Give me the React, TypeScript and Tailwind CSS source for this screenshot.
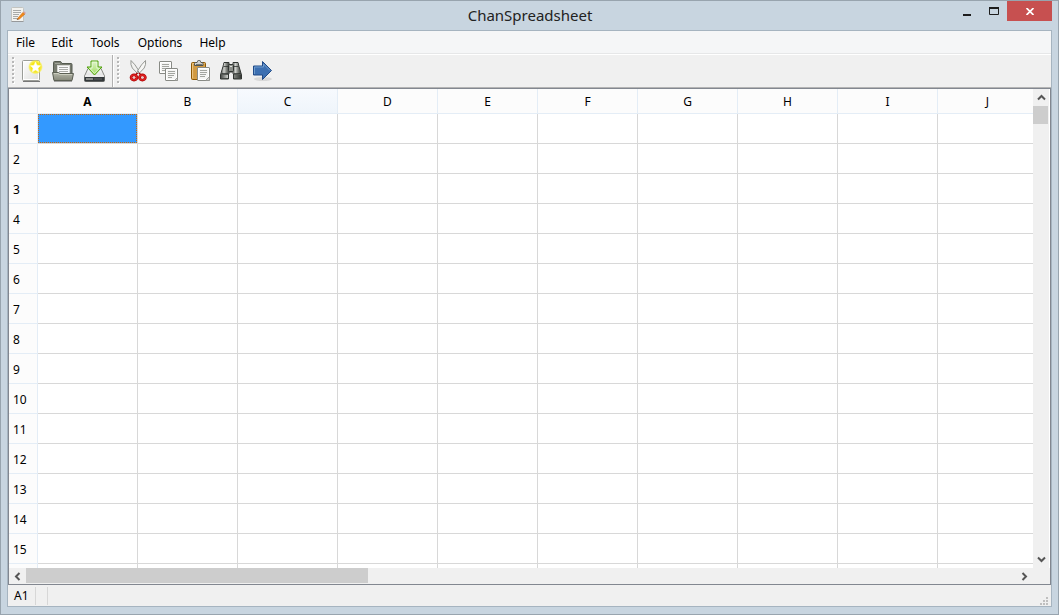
import type { ReactNode } from "react";

const columns = ["A", "B", "C", "D", "E", "F", "G", "H", "I", "J"];
const rows = Array.from({ length: 15 }, (_, i) => i + 1);
const menus = ["File", "Edit", "Tools", "Options", "Help"];

function AppIcon() {
  return (
    <svg width="16" height="16" viewBox="0 0 16 16" fill="none" aria-hidden="true">
      <rect x="1.5" y=".5" width="12" height="14" rx="1" fill="#f3f3f0" stroke="#c3c4c0" />
      <path d="M1.5 14.5h12" stroke="#96989a" />
      <path d="M3 3.500h8M3 5.500h8M3 7.500h6M3 9.500h5M3 11.500h4" stroke="#a8aaa8" />
      <path d="M7.500 11.500 13 5.300l2 1.700-5.500 5-2.500.5z" fill="#f08a1c" stroke="#c9670a" strokeWidth=".5" />
      <path d="m13 5.300 1-1 2 1.700-1 1z" fill="#d7a0a0" />
      <path d="m7.500 11.500-.5 1.300 2-.8z" fill="#444" />
    </svg>
  );
}

function NewIcon() {
  return (
    <svg width="24" height="24" viewBox="0 0 24 24" fill="none" aria-hidden="true">
      <defs>
        <linearGradient id="paper" x1="0" y1="0" x2="1" y2="1">
          <stop stopColor="#fff" />
          <stop offset="1" stopColor="#dededc" />
        </linearGradient>
        <radialGradient id="glow">
          <stop offset=".5" stopColor="#f5e500" />
          <stop offset=".8" stopColor="#f8ec30" stopOpacity=".8" />
          <stop offset="1" stopColor="#f8f060" stopOpacity="0" />
        </radialGradient>
      </defs>
      <path d="M3 22.500h17" stroke="#777" />
      <rect x="2.500" y="1.500" width="17" height="20" rx="1" fill="url(#paper)" stroke="#9b9d98" />
      <rect x="3.500" y="2.500" width="15" height="18" stroke="#fff" />
      <circle cx="15.500" cy="8" r="7.500" fill="url(#glow)" />
      <path d="m15.500 3 1.500 3.200 3.500.5-2.500 2.500.6 3.500-3.100-1.600-3.100 1.600.6-3.500-2.500-2.500 3.500-.5z" fill="#fff" stroke="#fffce0" strokeWidth=".6" />
    </svg>
  );
}

function OpenIcon() {
  return (
    <svg width="24" height="24" viewBox="0 0 24 24" fill="none" aria-hidden="true">
      <defs>
        <linearGradient id="folder" x1="0" y1="0" x2="0" y2="1">
          <stop stopColor="#b6b8aa" />
          <stop offset="1" stopColor="#85877a" />
        </linearGradient>
      </defs>
      <path d="M2.500 20V3.500q0-1 1-1H9q1 0 1.500 1l.5 1h9q1 0 1 1V20z" fill="#777b6f" stroke="#555a50" />
      <path d="M4 4.500h5" stroke="#a1a499" />
      <rect x="6.500" y="6.500" width="12" height="9" fill="#fafafa" stroke="#d6d6d3" />
      <path d="M8 8.500h9M8 10.500h9M8 12.500h9" stroke="#a9aaa7" />
      <path d="M1.500 13.500h6l1.500 1h13.500L21 21.500H3z" fill="url(#folder)" stroke="#5c6055" strokeLinejoin="round" />
      <path d="M3 14.500h4l1.500 1h12.500" stroke="#cbcdbf" />
      <path d="M3 22.500h18" stroke="#555" opacity=".5" />
    </svg>
  );
}

function SaveIcon() {
  return (
    <svg width="24" height="24" viewBox="0 0 24 24" fill="none" aria-hidden="true">
      <defs>
        <linearGradient id="drive" x1="0" y1="0" x2="0" y2="1">
          <stop stopColor="#fafafa" />
          <stop offset="1" stopColor="#cfcfcf" />
        </linearGradient>
        <linearGradient id="down" x1="0" y1="0" x2="0" y2="1">
          <stop stopColor="#e1f5cd" />
          <stop offset="1" stopColor="#9cdb5a" />
        </linearGradient>
      </defs>
      <path d="M6 9.500h13l3.500 7.500v4.500q0 1-1 1H3.500q-1 0-1-1V17z" fill="url(#drive)" stroke="#888a85" />
      <path d="M3 17h19" stroke="#f7f7f7" />
      <path d="M2.500 18h20v3.500q0 1-1 1H3.500q-1 0-1-1z" fill="#34393c" />
      <path d="M4 20h7" stroke="#858885" strokeWidth="2" />
      <path d="M13 19v2M15 19v2M17 19v2M19 19v2" stroke="#6f7270" strokeWidth=".8" />
      <path d="M9 2h7v6h4l-7.500 8L5 8h4z" fill="url(#down)" stroke="#4da006" strokeLinejoin="round" />
      <path d="M10.200 3.200h4.600v6h2.500l-4.800 5.200L7.700 9.200h2.500z" stroke="#eafadd" strokeWidth=".8" />
    </svg>
  );
}

function CutIcon() {
  return (
    <svg width="24" height="24" viewBox="0 0 24 24" fill="none" aria-hidden="true">
      <path d="M5 1.500q-.8 4 1.300 7.500l5.200 5.500 1.500-2.500Q9 5 5 1.500z" fill="#f1f1ef" stroke="#8c8e89" strokeWidth=".9" />
      <path d="M19.500 1.500q.8 4-1.300 7.500L13 14.500 11.500 12q4-7 8-10.500z" fill="#f7f7f5" stroke="#8c8e89" strokeWidth=".9" />
      <circle cx="12.200" cy="12.500" r=".8" fill="#888" />
      <path d="m11.500 14-2 2M13 14l2 2" stroke="#a80000" strokeWidth="1.500" />
      <ellipse cx="8" cy="18.500" rx="2.900" ry="2.500" stroke="#a40000" strokeWidth="2.800" />
      <ellipse cx="16.400" cy="18.500" rx="2.900" ry="2.500" stroke="#a40000" strokeWidth="2.800" />
      <ellipse cx="8" cy="18.500" rx="2.900" ry="2.500" stroke="#df2020" strokeWidth="1.500" />
      <ellipse cx="16.400" cy="18.500" rx="2.900" ry="2.500" stroke="#df2020" strokeWidth="1.500" />
      <circle cx="8" cy="18.500" r="1.300" fill="#efc6c6" />
      <circle cx="16.400" cy="18.500" r="1.300" fill="#efc6c6" />
    </svg>
  );
}

function CopyIcon() {
  return (
    <svg width="24" height="24" viewBox="0 0 24 24" fill="none" aria-hidden="true">
      <rect x="2.500" y="2.500" width="12" height="12" rx=".5" fill="#f5f5f4" stroke="#888a85" />
      <rect x="3.500" y="3.500" width="10" height="10" stroke="#fff" />
      <path d="M5 5.500h7M5 7.500h7M5 9.500h6M5 11.500h3" stroke="#a3a5a0" />
      <rect x="8.500" y="9.500" width="12" height="12" rx=".5" fill="#f5f5f4" stroke="#888a85" />
      <rect x="9.500" y="10.500" width="10" height="10" stroke="#fff" />
      <path d="M11 12.500h7M11 14.500h7M11 16.500h6M11 18.500h4" stroke="#a3a5a0" />
      <path d="m17.500 21.500 3-3v3z" fill="#d3d4d1" stroke="#888a85" strokeWidth=".7" />
    </svg>
  );
}

function PasteIcon() {
  return (
    <svg width="24" height="24" viewBox="0 0 24 24" fill="none" aria-hidden="true">
      <rect x="3.500" y="3.500" width="14" height="17" rx="1" fill="#d7a24c" stroke="#8f5902" />
      <path d="M4.500 19V4.500h12" stroke="#ecc27d" />
      <rect x="5.500" y="5.500" width="10" height="13" fill="#c88e35" opacity=".4" />
      <path d="M6.500 6.500v-2q0-1 1-1H9l.5-1q0-1 1-1h1q1 0 1 1l.5 1h1q1 0 1 1v2z" fill="#d0d1ce" stroke="#50534f" />
      <path d="M8 5.500h6" stroke="#777975" />
      <rect x="9.500" y="8.500" width="12" height="13" rx=".5" fill="#f5f5f4" stroke="#888a85" />
      <rect x="10.500" y="9.500" width="10" height="11" stroke="#fff" />
      <path d="M12 11.500h7M12 13.500h7M12 15.500h6M12 17.500h5" stroke="#a3a5a0" />
      <path d="m17.500 21.500 4-4v4z" fill="#d3d4d1" stroke="#888a85" strokeWidth=".7" />
    </svg>
  );
}

function FindIcon() {
  return (
    <svg width="24" height="24" viewBox="0 0 24 24" fill="none" aria-hidden="true">
      <defs>
        <linearGradient id="barrel">
          <stop stopColor="#4b4e4b" />
          <stop offset=".35" stopColor="#d0d2ce" />
          <stop offset=".65" stopColor="#80837e" />
          <stop offset="1" stopColor="#343835" />
        </linearGradient>
      </defs>
      <path d="M5 3.500h5v2h4v-2h5l1 4 2.500 8.500v4h-8v-7h-5v7h-8v-4L4 7.500z" fill="#565a56" stroke="#303431" strokeLinejoin="round" />
      <path d="M5 4h5l.5 11H2l2.500-7z" fill="url(#barrel)" />
      <path d="M14 4h5l.5 4L22 15h-8.500z" fill="url(#barrel)" />
      <rect x="9.500" y="5.500" width="5" height="7" rx="1" fill="#8b8e89" stroke="#303431" />
      <path d="M11 7.500h2" stroke="#e2e3df" />
      <path d="M4.500 7.500h5M14.500 7.500h5M2.500 14.500h7M14.500 14.500h7" stroke="#303431" strokeWidth=".8" />
      <path d="M2 16h7v3H2zM15 16h7v3h-7z" fill="url(#barrel)" />
    </svg>
  );
}

function GoIcon() {
  return (
    <svg width="24" height="24" viewBox="0 0 24 24" fill="none" aria-hidden="true">
      <ellipse cx="13" cy="20" rx="9" ry="2" fill="#d8d8d8" />
      <path d="M3.500 7h9V2.500l9 9-9 9V16h-9z" fill="#3c6fb1" stroke="#204a87" strokeLinejoin="round" />
      <path d="M4.500 15V8h9V5l6.500 6.500" stroke="#6f9ccd" />
    </svg>
  );
}

function ToolButton({ label, children }: { label: string; children: ReactNode }) {
  return (
    <button type="button" aria-label={label} className="flex h-8 w-[31px] items-center justify-center hover:bg-sky-100">
      {children}
    </button>
  );
}

function Grip() {
  return (
    <svg width="3" height="28" viewBox="0 0 3 28" className="shrink-0" aria-hidden="true">
      {[0, 1, 2, 3, 4, 5, 6].map((n) => (
        <g key={n}>
          <rect x="1" y={n * 4 + 1} width="2" height="2" fill="#fff" />
          <rect x="0" y={n * 4} width="2" height="2" fill="#b8b8b8" />
        </g>
      ))}
    </svg>
  );
}

function Arrow({ d }: { d: string }) {
  return (
    <svg width="9" height="9" viewBox="0 0 9 9" fill="none" aria-hidden="true">
      <path d={d} stroke="#555" strokeWidth="2" />
    </svg>
  );
}

export default function App() {
  return (
    <div className="flex h-screen flex-col overflow-hidden border border-[#98a4ae] bg-[#c8d5e0] px-[7px] pb-[7px] font-['Noto_Sans',sans-serif] text-xs text-black">
      <header className="flex h-[29px] shrink-0 items-start">
        <div className="flex h-7 flex-1 items-center">
          <span className="ml-0.5">
            <AppIcon />
          </span>
        </div>
        <h1 className="pt-[3px] text-[15px] leading-[22px] text-[#222]">ChanSpreadsheet</h1>
        <div className="-mr-px flex flex-1 justify-end">
          <button type="button" aria-label="Minimize" className="flex h-5 w-[27px] items-center justify-center">
            <svg width="10" height="10" viewBox="0 0 10 10" aria-hidden="true">
              <path d="M1 8h8v2H1z" fill="#1d1d1d" />
            </svg>
          </button>
          <button type="button" aria-label="Maximize" className="flex h-5 w-[27px] items-center justify-center">
            <svg width="10" height="8" viewBox="0 0 10 8" fill="none" aria-hidden="true">
              <path d="M.5 1h9v6.500h-9z" stroke="#1d1d1d" />
              <path d="M0 1h10" stroke="#1d1d1d" strokeWidth="2" />
            </svg>
          </button>
          <button type="button" aria-label="Close" className="flex h-5 w-[45px] items-center justify-center bg-[#c75050]">
            <svg width="8" height="7" viewBox="0 0 8 7" aria-hidden="true">
              <path d="m.5 0 7 7M7.500 0l-7 7" stroke="#fff" strokeWidth="1.700" />
            </svg>
          </button>
        </div>
      </header>

      <main className="-mx-px flex min-h-0 flex-1 flex-col border border-[#a6b4c0] bg-[#f0f0f0]">
        <nav
          aria-label="Menu"
          className="grid h-[23px] shrink-0 grid-cols-[35px_38px_48px_62px_43px] items-center border-b border-[#e6e7e8] bg-[#f5f6f7] pt-0.5"
        >
          {menus.map((name) => (
            <button key={name} type="button" className="text-center leading-5 hover:bg-sky-100">
              {name}
            </button>
          ))}
        </nav>

        <div role="toolbar" aria-label="Tools" className="flex h-[34px] shrink-0 items-center border-t border-b border-t-white border-b-[#b4b4b4]">
          <div className="flex h-full items-center border-r border-[#b0b0b0] pr-[3px] pl-1">
            <Grip />
            <div className="flex pl-px">
              <ToolButton label="New"><NewIcon /></ToolButton>
              <ToolButton label="Open"><OpenIcon /></ToolButton>
              <ToolButton label="Save"><SaveIcon /></ToolButton>
            </div>
          </div>
          <div className="flex h-full items-center border-l border-white pl-[3px]">
            <Grip />
            <div className="flex pl-0.5">
              <ToolButton label="Cut"><CutIcon /></ToolButton>
              <ToolButton label="Copy"><CopyIcon /></ToolButton>
              <ToolButton label="Paste"><PasteIcon /></ToolButton>
              <ToolButton label="Find"><FindIcon /></ToolButton>
              <ToolButton label="Go to cell"><GoIcon /></ToolButton>
            </div>
          </div>
        </div>

        <section aria-label="Sheet" className="flex min-h-0 flex-1 flex-col border border-[#828790] bg-white">
          <div className="flex min-h-0 flex-1">
            <div className="min-w-0 flex-1 overflow-hidden">
              <table className="w-[1029px] table-fixed border-separate border-spacing-0">
                <thead>
                  <tr className="h-[25px]">
                    <th aria-label="Select all" className="w-[29px] border-r border-b border-[#e4edf6] bg-[#fcfcfc] p-0" />
                    {columns.map((name, c) => (
                      <th
                        key={name}
                        scope="col"
                        className={`border-r border-b border-[#e4edf6] px-0 pt-0.5 pb-0 leading-[22px] ${c === 0 ? "font-bold" : "font-normal"} ${c === 2 ? "bg-linear-to-b from-[#f7fafe] to-[#eff5fb]" : "bg-[#fcfcfc]"}`}
                      >
                        {name}
                      </th>
                    ))}
                  </tr>
                </thead>
                <tbody>
                  {rows.map((row) => (
                    <tr key={row} className="h-[30px]">
                      <th
                        scope="row"
                        className={`border-r border-b border-[#e4edf6] bg-[#fcfcfc] pt-0.5 pr-0 pb-0 pl-1 text-left leading-5 ${row === 1 ? "font-bold" : "font-normal"}`}
                      >
                        {row}
                      </th>
                      {columns.map((name) => (
                        <td key={name} className="border-r border-b border-[#d8d8d8] p-0">
                          {row === 1 && name === "A" && (
                            <div className="h-[29px] bg-[#3399ff] outline-1 -outline-offset-1 outline-[#cc6600] outline-dotted" />
                          )}
                        </td>
                      ))}
                    </tr>
                  ))}
                  <tr className="h-[30px]">
                    <td className="border-r border-[#e4edf6] bg-[#fcfcfc] p-0" />
                    {columns.map((name) => (
                      <td key={name} className="border-r border-[#d8d8d8] p-0" />
                    ))}
                  </tr>
                </tbody>
              </table>
            </div>
            <div className="flex w-[17px] shrink-0 flex-col border-r border-white bg-[#f0f0f0]">
              <button type="button" aria-label="Scroll up" className="flex h-[17px] items-center justify-center">
                <Arrow d="M1 6.500 4.500 3 8 6.500" />
              </button>
              <div className="mr-px h-[18px] bg-[#cdcdcd]" />
              <div className="flex-1" />
              <button type="button" aria-label="Scroll down" className="flex h-[17px] items-center justify-center">
                <Arrow d="M1 2.500 4.500 6 8 2.500" />
              </button>
            </div>
          </div>
          <div className="flex h-4 shrink-0 bg-[#f0f0f0] pr-[17px]">
            <button type="button" aria-label="Scroll left" className="flex w-[17px] items-center justify-center">
              <Arrow d="M6.500 1 3 4.500 6.500 8" />
            </button>
            <div className="flex min-w-0 flex-1">
              <div className="mb-px w-[342px] bg-[#cdcdcd]" />
            </div>
            <button type="button" aria-label="Scroll right" className="flex w-[17px] items-center justify-center">
              <Arrow d="M2.500 1 6 4.500 2.500 8" />
            </button>
          </div>
        </section>

        <footer className="flex h-[21px] shrink-0 items-center pt-px">
          <span className="border-r border-[#d7d7d7] pr-1.5 pl-1.5 leading-[18px]">A1</span>
          <span className="h-[18px] w-3 border-r border-[#d7d7d7]" />
          <svg width="10" height="10" viewBox="0 0 10 10" className="mr-0.5 ml-auto self-end" fill="#bfbfbf" aria-hidden="true">
            <path d="M7 1h2v2H7zM4 4h2v2H4zM7 4h2v2H7zM1 7h2v2H1zM4 7h2v2H4zM7 7h2v2H7z" />
          </svg>
        </footer>
      </main>
    </div>
  );
}
